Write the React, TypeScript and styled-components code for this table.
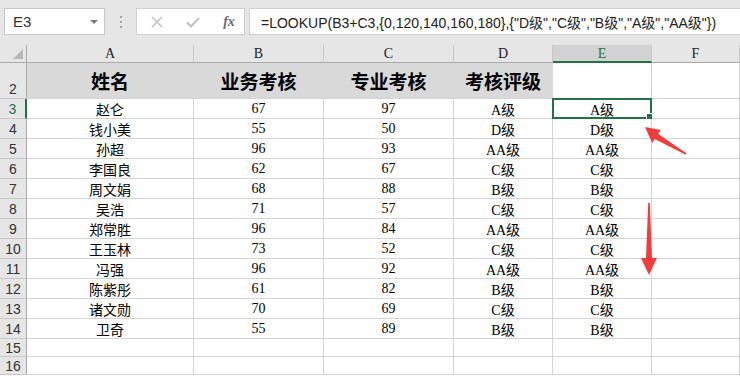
import { Fragment } from 'react'
import styled, { createGlobalStyle } from 'styled-components'

const GlobalStyle = createGlobalStyle`
    html, body {
        margin: 0;
        padding: 0;
        background: #ffffff;
    }
    * {
        box-sizing: border-box;
    }
`

const rows = [
    ['赵仑', '67', '97', 'A级'],
    ['钱小美', '55', '50', 'D级'],
    ['孙超', '96', '93', 'AA级'],
    ['李国良', '62', '67', 'C级'],
    ['周文娟', '68', '88', 'B级'],
    ['吴浩', '71', '57', 'C级'],
    ['郑常胜', '96', '84', 'AA级'],
    ['王玉林', '73', '52', 'C级'],
    ['冯强', '96', '92', 'AA级'],
    ['陈紫彤', '61', '82', 'B级'],
    ['诸文勋', '70', '69', 'C级'],
    ['卫奇', '55', '89', 'B级'],
]

const Page = styled.div`
    position: relative;
    width: 740px;
    height: 376px;
    overflow: hidden;
    background: #ffffff;
`

const Toolbar = styled.div`
    height: 45px;
    background: #e6e6e6;
    display: flex;
    align-items: flex-start;
    padding: 8px 0 0 4px;
`

const NameBox = styled.div`
    width: 101px;
    height: 27px;
    background: #ffffff;
    border: 1px solid #c6c6c6;
    display: flex;
    align-items: center;
    justify-content: space-between;
    padding: 0 6px 0 8px;
    font-family: "Liberation Sans", Arial, sans-serif;
    font-size: 15px;
    color: #333333;
`

const DropArrow = styled.span`
    width: 0;
    height: 0;
    border-left: 4px solid transparent;
    border-right: 4px solid transparent;
    border-top: 4px solid #7a7a7a;
`

const Dots = styled.div`
    width: 31px;
    height: 27px;
    display: flex;
    flex-direction: column;
    align-items: center;
    justify-content: center;
    gap: 3px;

    span {
        width: 2px;
        height: 2px;
        background: #a6a6a6;
    }
`

const FxBox = styled.div`
    width: 109px;
    height: 27px;
    background: #ffffff;
    border: 1px solid #d0d0d0;
    display: grid;
    grid-template-columns: 36px 36px 36px;
    align-items: center;
    justify-items: center;
    padding-left: 2px;
`

const FxText = styled.span`
    font-family: "Liberation Serif", serif;
    font-style: italic;
    font-weight: bold;
    font-size: 14px;
    color: #6a6a6a;
`

const FormulaBox = styled.div`
    flex: 1;
    height: 27px;
    margin-left: 4px;
    background: #ffffff;
    border: 1px solid #d0d0d0;
    border-right: none;
    display: flex;
    align-items: center;
    padding-left: 11px;
    font-family: "Liberation Sans", "Noto Sans CJK SC", sans-serif;
    font-size: 14px;
    color: #222222;
    white-space: nowrap;
    overflow: hidden;
`

const Sheet = styled.div`
    display: grid;
    grid-template-columns: 27px 167px 130px 130px 99px 99px 88px;
    grid-template-rows: 18px 36px repeat(12, 20px) 18px 18px;
`

const Corner = styled.div`
    background: #e6e6e6;
    border-right: 1px solid #ababab;
    border-bottom: 1px solid #ababab;
    display: flex;
    align-items: flex-end;
    justify-content: flex-end;
    padding: 0 3px 3px 0;
`

const ColHead = styled.div<{ $active?: boolean }>`
    background: ${(p) => (p.$active ? '#d2d2d2' : '#e6e6e6')};
    border-right: 1px solid #c8c8c8;
    border-bottom: ${(p) => (p.$active ? '2px solid #217346' : '1px solid #ababab')};
    display: flex;
    align-items: center;
    justify-content: center;
    padding-top: ${(p) => (p.$active ? '1px' : '0')};
    font-family: "Liberation Serif", serif;
    font-size: 14px;
    color: ${(p) => (p.$active ? '#217346' : '#222222')};
`

const RowHead = styled.div<{ $active?: boolean; $bottom?: boolean }>`
    background: #e6e6e6;
    border-right: ${(p) => (p.$active ? '2px solid #217346' : '1px solid #ababab')};
    border-bottom: 1px solid #c8c8c8;
    display: flex;
    align-items: ${(p) => (p.$bottom ? 'flex-end' : 'center')};
    justify-content: center;
    padding-bottom: ${(p) => (p.$bottom ? '1px' : '0')};
    font-family: "Liberation Sans", Arial, sans-serif;
    font-size: 14px;
    color: ${(p) => (p.$active ? '#217346' : '#333333')};
`

const Cell = styled.div<{ $head?: boolean }>`
    position: relative;
    background: ${(p) => (p.$head ? '#d9d9d9' : '#ffffff')};
    border-right: 1px solid ${(p) => (p.$head ? '#d9d9d9' : '#d4d4d4')};
    border-bottom: 1px solid #d4d4d4;
    display: flex;
    align-items: center;
    justify-content: center;
    font-family: "Liberation Serif", "Noto Sans CJK SC", serif;
    font-size: ${(p) => (p.$head ? '19px' : '14px')};
    font-weight: ${(p) => (p.$head ? 700 : 400)};
    color: #000000;
    white-space: nowrap;
`

const HeadText = styled.span`
    font-family: "Noto Sans CJK SC", sans-serif;
    font-weight: 700;
`

const Selection = styled.div`
    position: absolute;
    left: -1px;
    top: -1px;
    right: -1px;
    bottom: -1px;
    border: 2px solid #217346;
    pointer-events: none;

    &::after {
        content: '';
        position: absolute;
        right: -4px;
        bottom: -4px;
        width: 6px;
        height: 6px;
        background: #217346;
        border: 1px solid #ffffff;
    }
`

const ArrowLayer = styled.svg`
    position: absolute;
    left: 0;
    top: 0;
    width: 740px;
    height: 376px;
    pointer-events: none;
`

function App() {
    const cols = ['A', 'B', 'C', 'D', 'E', 'F']

    return (
        <Page>
            <GlobalStyle />
            <Toolbar>
                <NameBox>
                    E3
                    <DropArrow />
                </NameBox>
                <Dots>
                    <span />
                    <span />
                    <span />
                </Dots>
                <FxBox>
                    <svg width="14" height="14" viewBox="0 0 14 14">
                        <path d="M2 2 L12 12 M12 2 L2 12" stroke="#c2c2c2" strokeWidth="1.6" fill="none" />
                    </svg>
                    <svg width="16" height="14" viewBox="0 0 16 14">
                        <path d="M2 7.5 L6 11.5 L14 3" stroke="#c2c2c2" strokeWidth="2.2" fill="none" />
                    </svg>
                    <FxText>fx</FxText>
                </FxBox>
                <FormulaBox>=LOOKUP(B3+C3,{'{'}0,120,140,160,180{'}'},{'{'}"D级","C级","B级","A级","AA级"{'}'})</FormulaBox>
            </Toolbar>

            <Sheet>
                <Corner>
                    <svg width="10" height="10" viewBox="0 0 10 10">
                        <path d="M10 0 L10 10 L0 10 Z" fill="#b7b7b7" />
                    </svg>
                </Corner>
                {cols.map((c) => (
                    <ColHead key={c} $active={c === 'E'}>{c}</ColHead>
                ))}

                <RowHead $bottom>2</RowHead>
                <Cell $head><HeadText>姓名</HeadText></Cell>
                <Cell $head><HeadText>业务考核</HeadText></Cell>
                <Cell $head><HeadText>专业考核</HeadText></Cell>
                <Cell $head><HeadText>考核评级</HeadText></Cell>
                <Cell />
                <Cell />

                {rows.map((r, i) => (
                    <Fragment key={'r' + i}>
                        <RowHead $active={i === 0}>{i + 3}</RowHead>
                        <Cell>{r[0]}</Cell>
                        <Cell>{r[1]}</Cell>
                        <Cell>{r[2]}</Cell>
                        <Cell>{r[3]}</Cell>
                        <Cell>
                            {r[3]}
                            {i === 0 && <Selection />}
                        </Cell>
                        <Cell />
                    </Fragment>
                ))}

                {[15, 16].map((n) => (
                    <Fragment key={'e' + n}>
                        <RowHead>{n}</RowHead>
                        <Cell />
                        <Cell />
                        <Cell />
                        <Cell />
                        <Cell />
                        <Cell />
                    </Fragment>
                ))}
            </Sheet>

            <ArrowLayer viewBox="0 0 740 376">
                <polygon
                    points="686.4,153.3 658.2,134 660.8,130 645,127 652.2,143 654.8,139 685.6,154.7"
                    fill="#f23c3c"
                />
                <polygon
                    points="648.2,203 649.8,203 652,258 657,258 649,275 641,258 646,258"
                    fill="#f23c3c"
                />
            </ArrowLayer>
        </Page>
    )
}

export default App
